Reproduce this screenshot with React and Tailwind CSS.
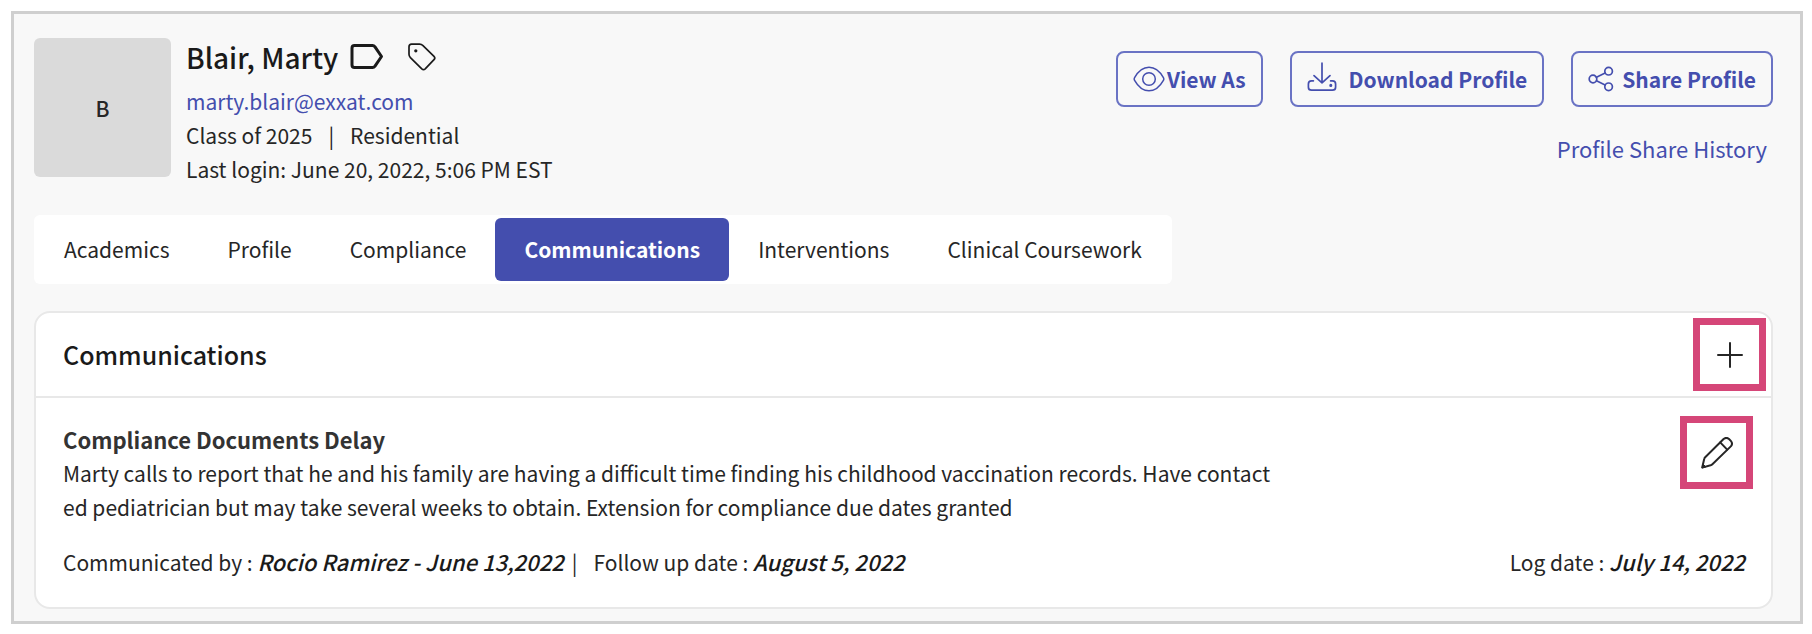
import { useState } from "react";

const tabs = ["Academics", "Profile", "Compliance", "Communications", "Interventions", "Clinical Coursework"];

const iconProps = {
  fill: "none",
  stroke: "currentColor",
  strokeLinecap: "round",
  strokeLinejoin: "round",
  "aria-hidden": true,
};

function LabelIcon() {
  return (
    <svg {...iconProps} strokeWidth="3" viewBox="0 0 34 28" className="h-7 w-[34px]">
      <path d="M4.5 2.5H22.5Q24 2.5 25 3.8L31.5 13.5L25 23.2Q24 24.5 22.5 24.5H4.5Q2 24.5 2 22V5Q2 2.5 4.5 2.5Z" />
    </svg>
  );
}

function TagIcon() {
  return (
    <svg {...iconProps} strokeWidth="1.7" viewBox="0 0 28 28" className="size-7">
      <path d="M3.5 1.2H11.5Q13.5 1.2 15 2.6L26 13.3Q27.6 15 26 16.7L17.2 25.8Q15.5 27.4 13.8 25.8L2.4 14.6Q1 13.2 1 11.3V3.7Q1 1.2 3.5 1.2Z" />
      <circle cx="7.8" cy="7.8" r="0.8" fill="currentColor" />
    </svg>
  );
}

function EyeIcon() {
  return (
    <svg {...iconProps} strokeWidth="1.5" viewBox="0 0 32 26" className="h-[26px] w-8">
      <path d="M1.6 11.6C5 5.5 10 1.2 16 1.2S27 5.5 30.4 11.6Q31.2 13 30.4 14.4C27 20.5 22 24.8 16 24.8S5 20.5 1.6 14.4Q.8 13 1.6 11.6Z" />
      <circle cx="16" cy="13" r="6.3" />
    </svg>
  );
}

function DownloadIcon() {
  return (
    <svg {...iconProps} strokeWidth="1.7" viewBox="0 0 30 30" className="mb-1 size-[30px]">
      <path d="M15 1.2V20.8M7 13.6L15 20.8L23 13.6" />
      <path d="M6.4 18.8H4.6Q1.4 18.8 1.4 22V25.2Q1.4 28.2 4.6 28.2H25.4Q28.6 28.2 28.6 25.2V22Q28.6 18.8 25.4 18.8H23.6" />
      <circle cx="23.8" cy="23.4" r="0.7" fill="currentColor" />
    </svg>
  );
}

function ShareIcon() {
  return (
    <svg {...iconProps} strokeWidth="1.7" viewBox="0 0 26 26" className="size-[26px]">
      <circle cx="5" cy="13" r="3.8" />
      <circle cx="20.6" cy="5.2" r="3.8" />
      <circle cx="20.6" cy="20.8" r="3.8" />
      <path d="M8.5 11.3L17.1 7M8.5 14.7L17.1 19" />
    </svg>
  );
}

function PlusIcon() {
  return (
    <svg {...iconProps} strokeWidth="2" viewBox="0 0 26 26" className="size-[26px]">
      <path d="M13 1V25M1 13H25" />
    </svg>
  );
}

function PencilIcon() {
  return (
    <svg {...iconProps} strokeWidth="2" viewBox="0 0 32 32" className="size-8">
      <path d="M1.2 30.6L3.2 22Q3.4 21 4.2 20.2L22.6 2Q25.4 -.2 28 2L29.8 3.9Q32.2 6.6 29.8 9.4L11.4 27.2Q10.6 28 9.6 28.3Z" />
      <path d="M19.2 5.4L26.2 12.6" />
      <path d="M1.2 30.6L2 27L4.6 29.6Z" fill="currentColor" strokeWidth="1" />
    </svg>
  );
}

function ActionButton({ icon, className, children }) {
  return (
    <button
      type="button"
      className={`flex h-14 items-center rounded-lg border-2 border-[#6a73c4] px-[15px] font-bold text-[#444eae] ${className}`}
    >
      {icon}
      {children}
    </button>
  );
}

function HighlightButton({ label, children }) {
  return (
    <button
      type="button"
      aria-label={label}
      className="flex size-[73px] shrink-0 items-center justify-center border-7 border-[#d54678]"
    >
      {children}
    </button>
  );
}

export default function App() {
  const [activeTab, setActiveTab] = useState("Communications");

  return (
    <div className="bg-white p-[11px] pr-[9px] font-['Noto_Sans_CJK_SC','Noto_Sans',sans-serif] text-[21px] leading-[34px] text-[#262626]">
      <main className="border-3 border-[#cfcfcf] bg-[#f8f8f8] pt-6 pr-[27px] pb-3 pl-5">
        {/* Student header */}
        <header className="flex items-start justify-between">
          <div className="flex gap-[15px]">
            <div className="flex h-[139px] w-[137px] items-center justify-center rounded-md bg-[#dadada] font-medium">
              B
            </div>
            <div>
              <div className="mb-2 flex h-[38px] items-center text-[#1a1a1a]">
                <h1 className="mr-3 text-[28px] font-medium">Blair, Marty</h1>
                <LabelIcon />
                <span className="ml-6">
                  <TagIcon />
                </span>
              </div>
              <a href="mailto:marty.blair@exxat.com" className="block text-[#444eae]">
                marty.blair@exxat.com
              </a>
              <p className="flex gap-4">
                <span>Class of 2025</span>
                <span>|</span>
                <span>Residential</span>
              </p>
              <p>Last login: June 20, 2022, 5:06 PM EST</p>
            </div>
          </div>

          <div className="flex flex-col items-end gap-6 pt-[13px]">
            <div className="flex gap-[27px]">
              <ActionButton icon={<EyeIcon />} className="gap-0.5">View As</ActionButton>
              <ActionButton icon={<DownloadIcon />} className="gap-3">Download Profile</ActionButton>
              <ActionButton icon={<ShareIcon />} className="gap-2">Share Profile</ActionButton>
            </div>
            <a href="#history" className="pr-1.5 text-[22px] text-[#444eae]">
              Profile Share History
            </a>
          </div>
        </header>

        {/* Tabs */}
        <nav className="mt-[29px] flex w-fit rounded-md bg-white px-px py-[3px]">
          {tabs.map((tab) => (
            <button
              key={tab}
              type="button"
              onClick={() => setActiveTab(tab)}
              className={`h-[63px] rounded-md px-[29px] pb-0.5 ${activeTab === tab ? "bg-[#444eae] font-bold text-white" : ""}`}
            >
              {tab}
            </button>
          ))}
        </nav>

        {/* Communications */}
        <section className="mt-[27px] rounded-2xl border-2 border-[#e8e8e8] bg-white">
          <div className="flex h-[85px] items-center justify-between border-b-2 border-[#e8e8e8] pr-[5px] pl-[27px]">
            <h2 className="pb-0.5 text-[25px] font-medium text-[#1a1a1a]">Communications</h2>
            <HighlightButton label="Add communication">
              <PlusIcon />
            </HighlightButton>
          </div>
          <div className="pt-[18px] pr-[18px] pb-7 pl-[27px]">
            <div className="flex justify-between">
              <div className="pt-1.5">
                <h3 className="text-[22px] font-bold text-[#333333]">Compliance Documents Delay</h3>
                <p>
                  Marty calls to report that he and his family are having a difficult time finding his childhood vaccination records. Have contact
                  <br />
                  ed pediatrician but may take several weeks to obtain. Extension for compliance due dates granted
                </p>
              </div>
              <HighlightButton label="Edit communication">
                <PencilIcon />
              </HighlightButton>
            </div>
            <div className="mt-5 flex justify-between pr-2">
              <p>
                Communicated by : <em className="text-[22px] font-medium text-[#1a1a1a]">Rocio Ramirez - June 13,2022</em>
                <span className="mr-4 ml-2">|</span>
                Follow up date : <em className="text-[22px] font-medium text-[#1a1a1a]">August 5, 2022</em>
              </p>
              <p>
                Log date : <em className="text-[22px] font-medium text-[#1a1a1a]">July 14, 2022</em>
              </p>
            </div>
          </div>
        </section>
      </main>
    </div>
  );
}
